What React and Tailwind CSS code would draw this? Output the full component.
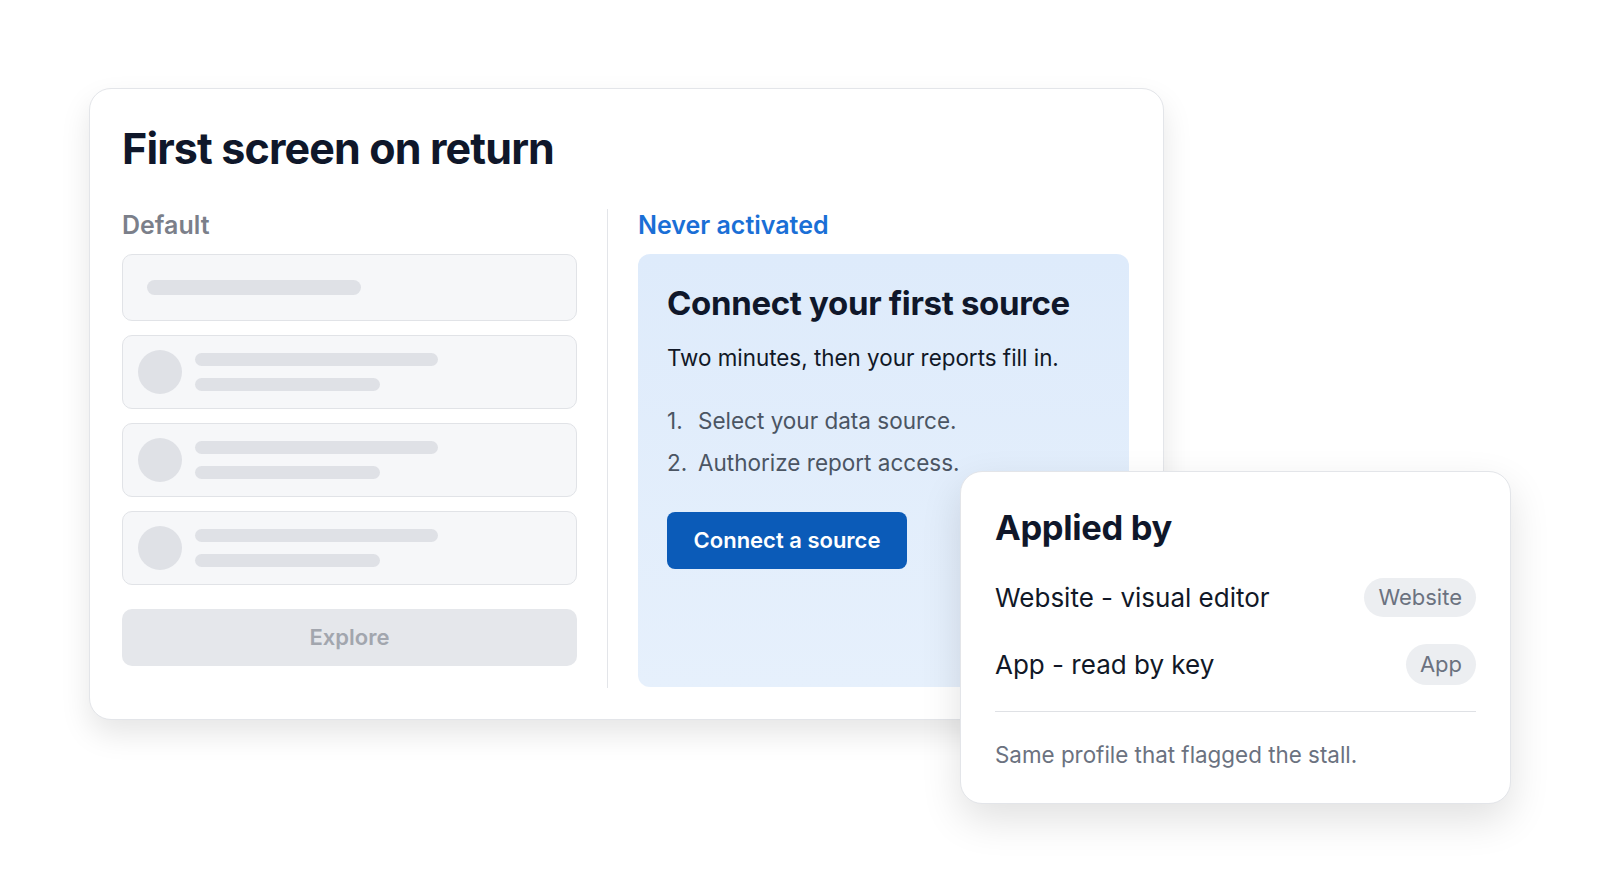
import React from "react";

function SkeletonRow() {
  return (
    <div className="h-[74px] rounded-[10px] border border-[#e1e3e7] bg-[#f6f7f9] flex items-center pl-[15px] gap-[13px]">
      <div className="w-[44px] h-[44px] rounded-full bg-[#dfe1e6]" />
      <div className="flex flex-col gap-[12px]">
        <div className="w-[243px] h-[13px] rounded-full bg-[#dfe1e6]" />
        <div className="w-[185px] h-[13px] rounded-full bg-[#dfe1e6]" />
      </div>
    </div>
  );
}

export default function App() {
  return (
    <div className="relative w-[1600px] h-[893px] bg-white overflow-hidden font-['Inter','Noto_Sans',sans-serif]">
      {/* MAIN CARD */}
      <div className="pt-[88px] pl-[89px]">
        <div className="w-[1075px] h-[632px] rounded-[22px] border border-[#e3e5e9] bg-white shadow-[0_14px_30px_rgba(0,0,0,0.10)] pl-[32px] pr-[33px] pt-[33px]">
          <h1 className="text-[43px] leading-[52px] font-bold tracking-[-0.02em] text-[#0f172a]">
            First screen on return
          </h1>

          <div className="flex mt-[35px]">
            {/* DEFAULT */}
            <div className="w-[455px]">
              <p className="text-[25px] leading-[32px] font-semibold text-[#7b7f8a]">Default</p>
              <div className="mt-[13px] flex flex-col gap-[14px]">
                <div className="h-[67px] rounded-[10px] border border-[#e1e3e7] bg-[#f6f7f9] flex items-center pl-[24px]">
                  <div className="w-[214px] h-[15px] rounded-full bg-[#dfe1e6]" />
                </div>
                <SkeletonRow />
                <SkeletonRow />
                <SkeletonRow />
              </div>
              <button className="mt-[24px] w-full h-[57px] rounded-[10px] bg-[#e5e7eb] text-[22px] font-semibold text-[#a2a6ae]">
                Explore
              </button>
            </div>

            <div className="ml-[30px] w-px h-[479px] bg-[#e3e5e9]" />

            {/* NEVER ACTIVATED */}
            <div className="ml-[30px] w-[491px]">
              <p className="text-[25px] leading-[32px] font-semibold text-[#1a6fd6]">Never activated</p>
              <div className="mt-[13px] h-[433px] rounded-[12px] bg-gradient-to-b from-[#deebfb] to-[#e6f0fc] pl-[29px] pt-[29px]">
                <h2 className="text-[33px] leading-[40px] font-bold tracking-[-0.01em] text-[#0f172a]">
                  Connect your first source
                </h2>
                <p className="mt-[20px] text-[22.4px] leading-[30px] text-[#111827]">
                  Two minutes, then your reports fill in.
                </p>
                <ol className="mt-[33px] flex flex-col gap-[12px] text-[22.5px] leading-[30px] text-[#4b5563]">
                  <li className="flex">
                    <span className="w-[31px]">1.</span>
                    <span>Select your data source.</span>
                  </li>
                  <li className="flex">
                    <span className="w-[31px]">2.</span>
                    <span>Authorize report access.</span>
                  </li>
                </ol>
                <button className="mt-[34px] w-[240px] h-[57px] rounded-[8px] bg-[#0b5bb8] text-white text-[22px] font-semibold">
                  Connect a source
                </button>
              </div>
            </div>
          </div>
        </div>
      </div>

      {/* APPLIED BY CARD */}
      <div className="absolute left-[960px] top-[471px] w-[551px] h-[333px] rounded-[22px] border border-[#e3e5e9] bg-white shadow-[0_16px_40px_rgba(0,0,0,0.12)] px-[34px] pt-[36px]">
        <h3 className="text-[34.5px] leading-[40px] font-bold tracking-[-0.01em] text-[#0f172a]">Applied by</h3>
        <div className="mt-[30px] flex items-center justify-between h-[39px]">
          <span className="text-[26px] text-[#111827]">Website - visual editor</span>
          <span className="h-[39px] px-[14px] rounded-full bg-[#eceef1] text-[22px] leading-[39px] text-[#6b7280]">Website</span>
        </div>
        <div className="mt-[27px] flex items-center justify-between h-[41px]">
          <span className="text-[26px] text-[#111827]">App - read by key</span>
          <span className="h-[41px] px-[14px] rounded-full bg-[#eceef1] text-[22px] leading-[41px] text-[#6b7280]">App</span>
        </div>
        <div className="mt-[26px] h-px bg-[#dfe1e5]" />
        <p className="mt-[29px] text-[22.4px] leading-[28px] text-[#6b7280]">Same profile that flagged the stall.</p>
      </div>
    </div>
  );
}
